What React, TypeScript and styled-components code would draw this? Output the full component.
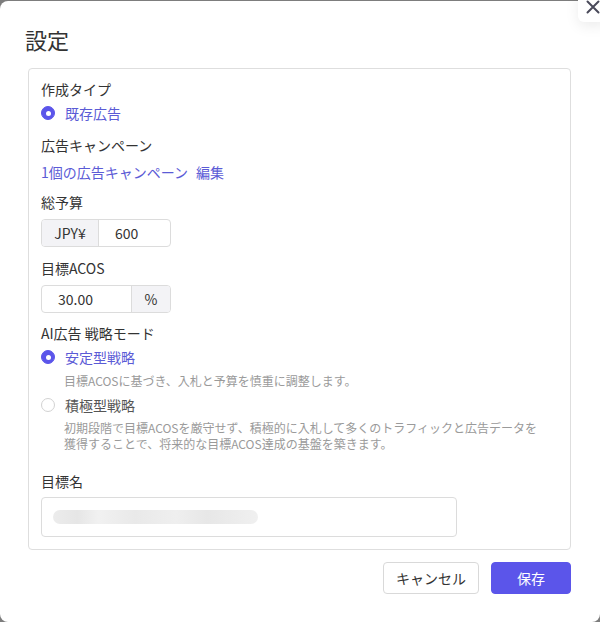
import React from 'react'
import styled, { createGlobalStyle } from 'styled-components'

const GlobalStyle = createGlobalStyle`
  html, body {
    margin: 0;
    padding: 0;
    background: #7d7d7d;
    overflow: hidden;
  }
  body {
    font-family: "Noto Sans CJK JP", "Noto Sans", sans-serif;
    color: #333;
  }
`

const primary = '#5b55ea'

const Modal = styled.div`
  position: relative;
  box-sizing: border-box;
  margin-top: 1px;
  width: 600px;
  height: 621px;
  background: #fff;
  border-radius: 8px;
  padding: 22px 29px 0 28px;
`

const CloseBtn = styled.button`
  position: absolute;
  top: -9px;
  right: -8px;
  width: 30px;
  height: 30px;
  padding: 0;
  border: none;
  background: #fff;
  border-radius: 6px;
  box-shadow: 0 4px 14px rgba(0, 0, 0, 0.08);
  display: flex;
  align-items: center;
  justify-content: center;
  color: #4a4a5a;
`

const Title = styled.h1`
  margin: 0 0 12px -3px;
  font-size: 22px;
  font-weight: 400;
  line-height: 33px;
  color: #333;
`

const Panel = styled.div`
  border: 1px solid #dedede;
  border-radius: 4px;
  padding: 9px 12px 12px 12px;
`

const Field = styled.div<{ $gap?: number }>`
  margin-bottom: ${(p) => p.$gap ?? 10}px;
`

const Label = styled.div`
  font-size: 14px;
  line-height: 22px;
  color: #333;
`

const RadioRow = styled.label<{ $checked?: boolean }>`
  display: flex;
  align-items: center;
  gap: 10px;
  height: 22px;
  margin-top: 2px;
  font-size: 14px;
  color: ${(p) => (p.$checked ? '#5b5bd6' : '#555')};
`

const RadioDot = styled.span<{ $checked?: boolean }>`
  box-sizing: border-box;
  width: 14px;
  height: 14px;
  border-radius: 50%;
  flex: none;
  background: ${(p) => (p.$checked ? primary : '#fff')};
  border: 1px solid ${(p) => (p.$checked ? primary : '#d2d2d2')};
  position: relative;
  &::after {
    content: '';
    display: ${(p) => (p.$checked ? 'block' : 'none')};
    position: absolute;
    left: 50%;
    top: 50%;
    width: 5px;
    height: 5px;
    margin: -2.5px 0 0 -2.5px;
    border-radius: 50%;
    background: #fff;
  }
`

const Desc = styled.div<{ $mt?: number; $mb?: number }>`
  padding-left: 23px;
  font-size: 12px;
  line-height: 16px;
  color: #9a9a9a;
  margin: ${(p) => p.$mt ?? 4}px 0 ${(p) => p.$mb ?? 0}px;
`

const Links = styled.div`
  display: flex;
  gap: 8px;
  margin-top: 5px;
  font-size: 14px;
  line-height: 22px;
  color: #5b5bd6;
`

const InputGroup = styled.div<{ $width: number }>`
  display: flex;
  width: ${(p) => p.$width}px;
  height: 28px;
  margin-top: 6px;
  box-sizing: border-box;
  border: 1px solid #dcdcdc;
  border-radius: 4px;
  overflow: hidden;
`

const Addon = styled.span<{ $width: number; $side: 'left' | 'right' }>`
  flex: none;
  width: ${(p) => p.$width}px;
  background: #f3f3f6;
  ${(p) => (p.$side === 'left' ? 'border-right' : 'border-left')}: 1px solid #dcdcdc;
  display: flex;
  align-items: center;
  justify-content: center;
  font-size: 14px;
  color: #333;
`

const Value = styled.span`
  flex: 1;
  display: flex;
  align-items: center;
  padding: 0 16px;
  font-size: 14px;
  color: #333;
`

const NameInput = styled.div`
  box-sizing: border-box;
  width: 416px;
  height: 40px;
  margin-top: 5px;
  border: 1px solid #dcdcdc;
  border-radius: 4px;
  display: flex;
  align-items: center;
  padding-left: 11px;
`

const Blurred = styled.span`
  display: block;
  width: 205px;
  height: 14px;
  border-radius: 7px;
  background: linear-gradient(
    90deg,
    #ececec 0%,
    #e6e6e6 12%,
    #f1f1f1 22%,
    #e9e9e9 40%,
    #efefef 60%,
    #e7e7e7 75%,
    #f0f0f0 100%
  );
  filter: blur(0.6px);
`

const Footer = styled.div`
  display: flex;
  justify-content: flex-end;
  gap: 12px;
  margin-top: 12px;
`

const Button = styled.button<{ $primary?: boolean }>`
  height: 32px;
  padding: 0;
  width: ${(p) => (p.$primary ? 80 : 96)}px;
  border-radius: 4px;
  font-family: inherit;
  font-size: 14px;
  border: 1px solid ${(p) => (p.$primary ? primary : '#d9d9d9')};
  background: ${(p) => (p.$primary ? primary : '#fff')};
  color: ${(p) => (p.$primary ? '#fff' : '#333')};
`

export default function App() {
  return (
    <>
      <GlobalStyle />
      <Modal>
        <CloseBtn aria-label="close">
          <svg width="14" height="14" viewBox="0 0 14 14">
            <path d="M1.5 1.5 L12.5 12.5 M12.5 1.5 L1.5 12.5" stroke="currentColor" strokeWidth="2" strokeLinecap="round" />
          </svg>
        </CloseBtn>
        <Title>設定</Title>
        <Panel>
          <Field>
            <Label>作成タイプ</Label>
            <RadioRow $checked>
              <RadioDot $checked />
              既存広告
            </RadioRow>
          </Field>
          <Field $gap={8}>
            <Label>広告キャンペーン</Label>
            <Links>
              <span>1個の広告キャンペーン</span>
              <span>編集</span>
            </Links>
          </Field>
          <Field>
            <Label>総予算</Label>
            <InputGroup $width={130}>
              <Addon $width={56} $side="left">JPY¥</Addon>
              <Value>600</Value>
            </InputGroup>
          </Field>
          <Field $gap={9}>
            <Label>目標ACOS</Label>
            <InputGroup $width={130}>
              <Value>30.00</Value>
              <Addon $width={38} $side="right">%</Addon>
            </InputGroup>
          </Field>
          <Field $gap={18}>
            <Label>AI広告 戦略モード</Label>
            <RadioRow $checked>
              <RadioDot $checked />
              安定型戦略
            </RadioRow>
            <Desc $mt={5} $mb={5}>目標ACOSに基づき、入札と予算を慎重に調整します。</Desc>
            <RadioRow>
              <RadioDot />
              積極型戦略
            </RadioRow>
            <Desc>
              初期段階で目標ACOSを厳守せず、積極的に入札して多くのトラフィックと広告データを
              <br />
              獲得することで、将来的な目標ACOS達成の基盤を築きます。
            </Desc>
          </Field>
          <Field $gap={0}>
            <Label>目標名</Label>
            <NameInput>
              <Blurred />
            </NameInput>
          </Field>
        </Panel>
        <Footer>
          <Button>キャンセル</Button>
          <Button $primary>保存</Button>
        </Footer>
      </Modal>
    </>
  )
}
